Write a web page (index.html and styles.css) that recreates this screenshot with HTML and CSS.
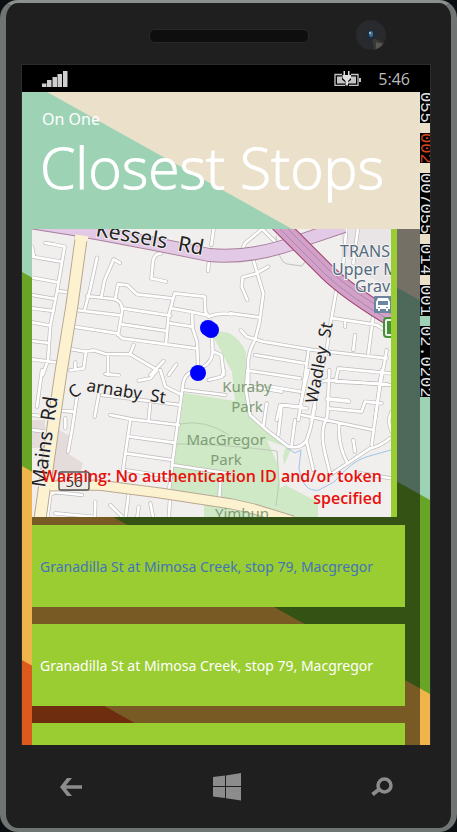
FILE: index.html
```
<!DOCTYPE html>
<html lang="en">
<head>
<meta charset="utf-8">
<meta name="viewport" content="width=device-width, initial-scale=1">
<title>Closest Stops</title>
<link rel="stylesheet" href="styles.css">
</head>
<body>
<div class="phone">
  <div class="bezel-top">
    <div class="speaker"></div>
    <svg class="camera" viewBox="0 0 30 30" aria-hidden="true">
      <circle cx="15" cy="15" r="15" fill="#292a2d"/>
      <path d="M16 17 28 23A15 15 0 0 1 18 30Z" fill="#3a3838"/>
      <path d="M20 22 27 24A15 15 0 0 1 20 29Z" fill="#5a5654"/>
      <circle cx="15" cy="15" r="5" fill="#202a3b"/>
      <ellipse cx="15" cy="14" rx="2" ry="3" fill="#3d7293"/>
      <circle cx="14" cy="13" r="1" fill="#b9cde9"/>
    </svg>
  </div>

  <div class="screen">
    <div class="status">
      <svg class="signal" viewBox="0 0 26 17" aria-hidden="true">
        <path d="M0 13.500h4.500V17H0zM5 10h4.500v7H5zM10.500 7h4.500v10h-4.500zM15.500 4h4.500v13h-4.500zM21 1h4.500v16H21z" fill="#cfcfcf"/>
      </svg>
      <svg class="battery" viewBox="0 0 28 15" aria-hidden="true">
        <path d="M8 3.500H1v11h10M17 3.500h7v11h-9" fill="none" stroke="#c4c4c4" stroke-width="1.300"/>
        <path d="M3 5.500h5v3l3 2.500v1.500H3zM17 5.500h5v7h-8V11l3-2zM25 7h2v4h-2z" fill="#c4c4c4"/>
        <path d="M9.500 0h1.500v4h3V0h1.500v4H17v3l-3 3v4.500h-2.500V10L8.500 7V4h1z" fill="#dedede"/>
      </svg>
      <span class="clock">5:46</span>
    </div>

    <main class="page">
      <svg class="stripes" viewBox="0 0 408 653" preserveAspectRatio="none" aria-hidden="true">
        <path d="M0 0H408V653H0Z" fill="#ebe0ca"/>
        <path d="M0-14 408 214V653H0Z" fill="#9dd2b4"/>
        <path d="M0 180 408 408V653H0Z" fill="#68a426"/>
        <path d="M0 374 408 602V653H0Z" fill="#f0b54a"/>
        <path d="M0 568 408 796H0Z" fill="#dd5a1e"/>
      </svg>

      <header class="heading">
        <p class="route">On One</p>
        <h1>Closest Stops</h1>
      </header>

      <div class="content">
        <section class="map">
          <svg class="map-art" viewBox="32 229 359 288" preserveAspectRatio="xMinYMin slice" role="img" aria-label="Map of nearby stops">
            <defs>
              <g id="streets" fill="none" stroke-linecap="round" stroke-linejoin="round">
                <path transform="translate(22 225) scale(.33333)" d="M70 54 95 58 128 65 122 100 105 200 85 300 78 405 62 450M30 95 118 110M30 65 35 90M30 158 108 172M108 198 140 202M30 210 100 222M30 250 95 258M30 292 85 302M30 348 80 354M30 403 100 412M225 98 205 190 188 255M294 114 275 103 248 165 238 215M195 213 275 222Q303 228 300 262L288 330M280 220 288 178 315 180 345 208 450 220M160 255 295 271M300 250 445 272M155 305 285 325 300 340 435 358 520 370M300 298 435 318M432 355 440 270 458 205 548 215 550 260 560 275M450 250 515 262 560 272M445 295 510 305M510 262 512 310 525 350 528 420M418 85Q396 85 393 110L388 160 432 170M575 12 568 60M562 100 558 138M560 275Q590 262 630 268M568 290 572 380Q570 410 545 425M575 380 598 390 605 450M145 372 190 380 215 376 250 387 325 388 405 435M325 385 335 360M192 380 185 430 145 436M160 430V412M258 390V450M385 450 425 408M440 450 463 418"/>
                <path transform="translate(230 200) scale(.33333)" d="M120 75 95 88 45 130 38 145M70 180 100 280 88 370 75 420Q50 460 55 512V560M115 200 75 222 38 232 35 260 52 300M0 340 88 352M32 390 50 410 100 425 250 450 470 475M75 465 225 490M55 512 210 535M120 560 210 575M320 265 300 380 290 450 265 550 245 660M235 455 215 600 205 660M310 355 410 370 440 375 480 400M345 365V380M430 345 415 460M375 405 370 450M470 450 450 560 435 660M325 505 480 520M325 505 318 540 265 545M318 545 470 552M290 598 358 605M150 615 230 625M150 615 140 660M100 90 135 125 140 150M350 75 340 190M385 75 370 190"/>
                <path transform="translate(210 370) scale(.33333)" d="M112 0 108 60 120 135 170 180 235 230Q275 238 290 210L300 180M290 215 310 300M118 48 215 65M170 100 160 170M275 110 215 105 205 195M255 150 245 225M295 0 270 110M315 110 300 180M358 0 352 140Q328 180 345 250L360 310M275 135 490 180M388 160Q382 220 410 275M540 205Q510 230 480 235L360 315M515 0 485 225M352 85 415 92M355 115 455 125 465 95 515 100M430 210 435 245M545 125Q530 150 545 185M350 30 540 45M450 310 545 325"/>
                <path transform="translate(22 370) scale(.33333)" d="M60 0 45 110M165 80 150 180 138 245M230 75 218 140M265 135 330 148 470 165M385 95 380 150M415 0 430 50 480 75M240 75 475 105M325 150 300 320M325 200 455 218M310 250 450 270M540 0Q485 0 482 50L455 250 440 370M485 60 610 75M450 285 630 312M305 300 440 320 M300 320 290 345M85 120 155 125M30 135 75 140M30 180 70 185M320 370 310 450M220 395 218 450M265 405 310 450M345 450 350 410M385 400 395 450M595 330 592 385M100 365 85 375 75 450M85 365 180 375M100 430 210 440M350 32 385 25 405 0M250 12 290 16M445 370 440 450M130 145V175M560 30 600 20 605 0"/>
              </g>
            </defs>
            <path d="M32 229H391V517H32Z" fill="#f1efee"/>
            <path d="M340 229H391V288L365 275 343 252Z" fill="#e9e4e5"/>
            <path d="M32 420H45V448H32ZM59 430 70 436 67 453 83 463 80 474 52 474Z" fill="#e4dcda"/>
            <path d="M184 393 235 401 232 372 214 338 213 330 229 333Q240 339 246 352V403L258 424 291 449 282 470 287 486 318 502V517H204V504L169 495 176 450Z" fill="#cfe8c5"/>
            <path d="M267 440 286 447 283 456 286 485 280 488 277 463Z" fill="#f1efee"/>
            <path d="M169 444Q215 443 277 451L279 482 276 506M180 424Q205 419 229 435" fill="none" stroke="#b9cbb2"/>
            <path d="M287 448 295 453 301 450 299 468Q303 493 319 490L334 482Q352 461 366 457L391 450" fill="none" stroke="#9fc4e6"/>
            <use href="#streets" class="street-edge"/>
            <use href="#streets" class="street-fill"/>
            <g fill="none" stroke-linejoin="round">
              <path d="M276 236Q278 262 287 264L302 266 309 256" stroke="#c4c1c1"/>
              <path d="M50 486 98 485 160 493 232 504 254 509 293 521" stroke="#b8a892" stroke-width="11"/>
              <path d="M82 232 72 305 61 372 54 420 40 519" stroke="#b8a892" stroke-width="13"/>
              <path d="M50 486 98 485 160 493 232 504 254 509 293 521" stroke="#fcf2d0" stroke-width="9"/>
              <path d="M82 232 72 305 61 372 54 420 40 519" stroke="#fcf2d0" stroke-width="11"/>
              <path d="M30 222 74 229 102 234 155 244 209 255Q250 259 297 242L344 226" stroke="#aa7f9c" stroke-width="14"/>
              <path d="M30 222 74 229 102 234 155 244 209 255Q250 259 297 242L344 226" stroke="#e2c9e6" stroke-width="12"/>
              <path d="M75 237 88 239" stroke="#fcf2d0" stroke-width="5"/>
              <path d="M276 221 327 272Q350 294 396 321" stroke="#9f4269" stroke-width="17"/>
              <path d="M276 221 327 272Q350 294 396 321" stroke="#d2a0c8" stroke-width="15"/>
              <path d="M278 219 329 270Q352 292 398 318M274 223 325 274Q348 296 394 323" stroke="#a98aaa"/>
            </g>
            <g class="road-name">
              <text transform="translate(95 236) rotate(10)" font-size="21">Kessels&#160; Rd</text>
              <text transform="translate(73 399) rotate(-32)" font-size="17">C</text>
              <text transform="translate(86 391) rotate(9)" font-size="17">arnaby&#160; St</text>
              <text transform="translate(317 404) rotate(-79)" font-size="17">Wadley&#160; St</text>
              <text transform="translate(45 488) rotate(-82)" font-size="20">Mains&#160; Rd</text>
            </g>
            <g class="park-name">
              <text x="247" y="392">Kuraby</text>
              <text x="247" y="412">Park</text>
              <text x="226" y="445">MacGregor</text>
              <text x="226" y="465">Park</text>
              <text x="242" y="519">Yimbun</text>
            </g>
            <g class="place-name">
              <text x="340" y="257">TRANSLINK</text>
              <text x="332" y="275">Upper Mount</text>
              <text x="355" y="292">Gravatt</text>
            </g>
            <rect x="374" y="296" width="18" height="17" rx="1" fill="#6b86a0"/>
            <path d="M378 298H388L390 302V309H388V311H386V309H380V311H378V309H376V302Z" fill="#fff"/>
            <path d="M378 301H388V305H378ZM378 307H380V308H378ZM386 307H388V308H386Z" fill="#6b86a0"/>
            <rect x="384" y="318" width="20" height="19" rx="3" fill="#f1efee" stroke="#439238" stroke-width="2"/>
            <rect x="387" y="321" width="12" height="13" fill="#439238"/>
            <rect x="59" y="472" width="30" height="18" rx="2" fill="#f0ece5" stroke="#555" stroke-width="1.500"/>
            <text class="shield" x="74" y="487">56</text>
            <g fill="#00f">
              <circle cx="208" cy="328" r="8"/>
              <circle cx="211" cy="330" r="8"/>
              <circle cx="198" cy="373" r="8"/>
            </g>
          </svg>
          <p class="warning">Warning: No authentication ID and/or token specified</p>
        </section>

        <ul class="stops">
          <li><a class="stop stop-current" href="#">Granadilla St at Mimosa Creek, stop 79, Macgregor</a></li>
          <li><a class="stop" href="#">Granadilla St at Mimosa Creek, stop 79, Macgregor</a></li>
          <li><div class="stop"></div></li>
        </ul>
      </div>

      <div class="counters">
        <span>055</span>
        <span class="hot">002</span>
        <span>007055</span>
        <span>014</span>
        <span>001</span>
        <span>02.0202</span>
      </div>
    </main>
  </div>

  <nav class="keys">
    <button type="button" aria-label="Back">
      <svg width="22" height="18" viewBox="0 0 22 18"><path d="M7 0H12L6 7.300H22V10.700H6L12 18H7L0 9Z" fill="#8c8c8c"/></svg>
    </button>
    <button type="button" aria-label="Start">
      <svg width="28" height="28" viewBox="0 0 28 28"><path d="M0 4 12 2.500V13H0ZM13 2.400 28 0V13H13ZM0 14H12V25L0 23.500ZM13 14H28V27.500L13 25.200Z" fill="#8c8c8c"/></svg>
    </button>
    <button type="button" aria-label="Search">
      <svg width="22" height="19" viewBox="0 0 22 19"><circle cx="13.500" cy="8.500" r="6.500" fill="none" stroke="#8c8c8c" stroke-width="3.500"/><path d="M8.500 12 1.500 17.500" stroke="#8c8c8c" stroke-width="4"/></svg>
    </button>
  </nav>
</div>
</body>
</html>
```
FILE: styles.css
```
* {
  box-sizing: border-box;
}

body {
  margin: 0;
  background: #0c0f12;
  font-family: "Open Sans", "Noto Sans", sans-serif;
}

h1,
p,
ul {
  margin: 0;
  padding: 0;
}

.phone {
  display: flex;
  flex-direction: column;
  height: 100vh;
  border: 6px solid #6f7573;
  border-top: 3px solid #8b908e;
  border-bottom-width: 4px;
  border-radius: 18px;
  background: #1f1f1f;
  overflow: hidden;
}

.bezel-top {
  position: relative;
  flex: none;
  display: flex;
  justify-content: center;
  height: 61px;
  padding-top: 26px;
}

.speaker {
  width: 160px;
  height: 14px;
  border: 1px solid #292929;
  border-radius: 6px;
  background: #0e0e0e;
}

.camera {
  position: absolute;
  top: 17px;
  right: 65px;
  width: 30px;
  height: 30px;
}

.screen {
  flex: 1;
  display: flex;
  flex-direction: column;
  min-height: 0;
  margin: 0 20px 0 15px;
  border: 1px solid #2c2c2c;
  border-bottom: 0;
}

.status {
  flex: none;
  display: flex;
  align-items: center;
  height: 27px;
  padding: 0 20px;
  background: #000;
}

.signal {
  width: 26px;
  height: 17px;
}

.battery {
  width: 28px;
  height: 15px;
  margin: 0 16px 0 auto;
}

.clock {
  color: #bdbdbd;
  font-size: 16px;
}

.page {
  position: relative;
  flex: 1;
  display: flex;
  flex-direction: column;
  min-height: 0;
  padding: 0 10px;
  overflow: hidden;
}

.stripes {
  position: absolute;
  inset: 0;
  width: 100%;
  height: 100%;
}

.heading {
  position: relative;
  flex: none;
  height: 137px;
  padding: 16px 0 0 8px;
  color: #fff;
}

.route {
  padding-left: 2px;
  font-family: "Noto Sans", sans-serif;
  font-size: 16px;
  line-height: 22px;
}

h1 {
  font-size: 57px;
  font-weight: 300;
  line-height: 74px;
  white-space: nowrap;
  -webkit-text-stroke: 1px #fff;
}

.content {
  position: relative;
  flex: 1;
  min-height: 0;
  background: rgba(0, 0, 0, .5);
  overflow: hidden;
}

.map {
  position: relative;
  height: 288px;
  margin-right: 23px;
  border-right: 6px solid #9acd32;
  overflow: hidden;
}

.map-art {
  display: block;
  width: 100%;
  height: 100%;
}

.street-edge {
  stroke: #bdbaba;
  stroke-width: 12px;
}

.street-fill {
  stroke: #fff;
  stroke-width: 8px;
}

.road-name {
  fill: #222;
  stroke: #f1efee;
  stroke-width: 2px;
  paint-order: stroke;
  font-family: "Noto Sans", sans-serif;
}

.park-name {
  fill: #7e9c76;
  font-size: 15px;
  font-family: "Noto Sans", sans-serif;
  text-anchor: middle;
}

.place-name {
  fill: #526b80;
  stroke: #f4f2f2;
  stroke-width: 2px;
  paint-order: stroke;
  font-size: 16px;
  font-family: "Noto Sans", sans-serif;
}

.shield {
  fill: #333;
  font-size: 15px;
  text-anchor: middle;
}

.warning {
  position: absolute;
  right: 9px;
  bottom: 8px;
  left: 4px;
  color: #e8100c;
  font-size: 16px;
  font-weight: 600;
  line-height: 22px;
  text-align: right;
}

.stops {
  display: grid;
  gap: 17px;
  margin: 8px 15px 0 0;
  list-style: none;
}

.stop {
  display: flex;
  align-items: center;
  height: 82px;
  padding: 0 8px;
  background: #9acd32;
  color: #fff;
  font-family: "Noto Sans", sans-serif;
  font-size: 14px;
  text-decoration: none;
  white-space: nowrap;
}

.stop-current {
  color: #4474b8;
}

.counters {
  position: absolute;
  top: 0;
  right: 0;
  display: flex;
  flex-direction: column;
  gap: 10px;
  width: 10px;
  color: #e4e4e4;
  font-family: "Liberation Mono", monospace;
  font-size: 17px;
  line-height: 10px;
}

.counters span {
  background: #000;
  writing-mode: vertical-rl;
  overflow: hidden;
}

.counters .hot {
  color: #d9461c;
}

.keys {
  flex: none;
  display: flex;
  align-items: center;
  justify-content: space-between;
  height: 83px;
  padding: 0 48px 0 44px;
}

.keys button {
  display: flex;
  align-items: center;
  justify-content: center;
  width: 42px;
  height: 42px;
  padding: 0;
  border: 0;
  background: none;
}
```
